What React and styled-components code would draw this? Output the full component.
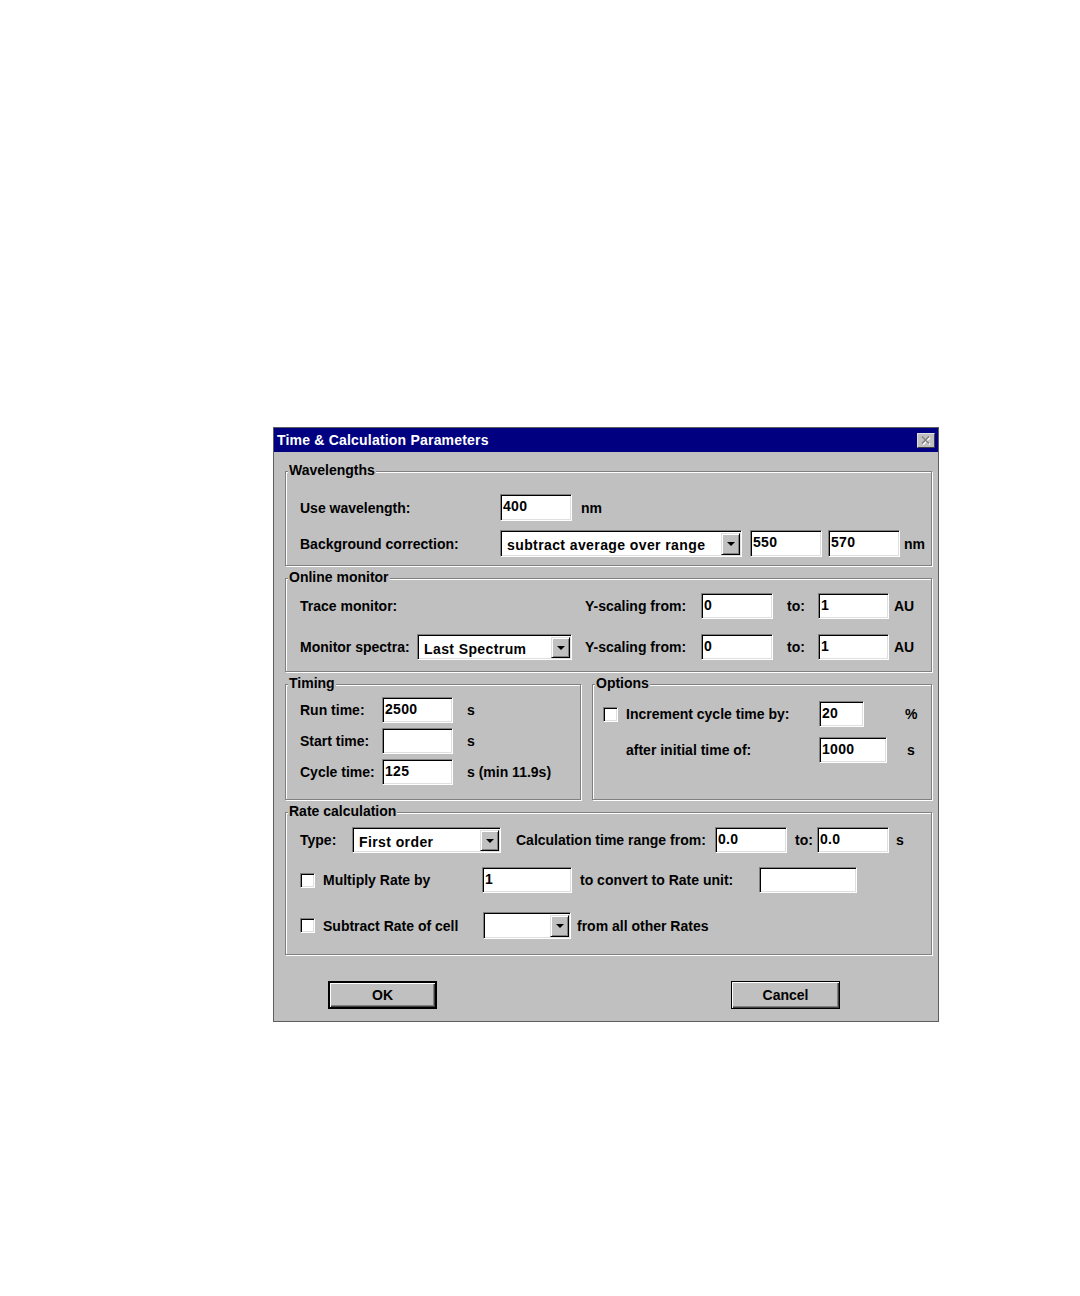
import React from 'react';
import styled, { createGlobalStyle } from 'styled-components';

const GlobalStyle = createGlobalStyle`
  body {
    margin: 0;
    background: #ffffff;
    font-family: "Liberation Sans", Arial, sans-serif;
  }
`;

// fondo blanco de la página, el diálogo va desplazado
const Page = styled.div`
  padding: 427px 0 0 273px;
  min-height: 1296px;
  box-sizing: border-box;
`;

const Window = styled.div`
  width: 666px;
  box-sizing: border-box;
  background: #c0c0c0;
  border: 1px solid #5e5e5e;
  color: #000;
  font-size: 14px;
  font-weight: bold;
`;

const TitleBar = styled.div`
  height: 24px;
  background: #000080;
  color: #fff;
  display: flex;
  align-items: center;
  justify-content: space-between;
  padding: 0 3px 0 3px;
`;

const Title = styled.span`
  font-size: 14px;
  font-weight: bold;
  letter-spacing: 0.2px;
`;

const CloseBox = styled.div`
  width: 18px;
  height: 15px;
  box-sizing: border-box;
  background: #c0c0c0;
  border: 1px solid;
  border-color: #dfdfdf #404040 #404040 #dfdfdf;
  display: flex;
  align-items: center;
  justify-content: center;
`;

const Body = styled.div`
  padding: 19px 6px 12px 11px;
  display: flex;
  flex-direction: column;
  gap: 12px;
`;

// grupo con borde "grabado" estilo Windows 95
const Group = styled.div`
  position: relative;
  box-sizing: border-box;
  border: 1px solid #808080;
  box-shadow: inset 1px 1px #fff, 1px 1px #fff;
  padding: ${({ $pt }) => $pt}px 0 ${({ $pb }) => $pb}px ${({ $pl }) => $pl || 14}px;
  width: ${({ $w }) => ($w ? `${$w}px` : 'auto')};
  flex: ${({ $w }) => ($w ? 'none' : '1')};
`;

const Legend = styled.span`
  position: absolute;
  top: -10px;
  left: 2px;
  line-height: 16px;
  padding: 0 1px;
  background: #c0c0c0;
`;

const Rows = styled.div`
  display: flex;
  flex-direction: column;
  gap: ${({ $gap }) => $gap}px;
`;

const Row = styled.div`
  display: flex;
  align-items: center;
  height: ${({ $h }) => $h || 26}px;
  margin-top: ${({ $mt }) => $mt || 0}px;
`;

const Columns = styled.div`
  display: flex;
  gap: 11px;
`;

const Label = styled.span`
  width: ${({ $w }) => ($w ? `${$w}px` : 'auto')};
  margin-left: ${({ $ml }) => $ml || 0}px;
  flex: none;
  white-space: nowrap;
  line-height: 16px;
`;

const Field = styled.input`
  width: ${({ $w }) => $w}px;
  height: 100%;
  box-sizing: border-box;
  margin: 0;
  padding: 0 2px 3px 2px;
  background: #fff;
  border: 1px solid;
  border-color: #808080 #fff #fff #808080;
  box-shadow: inset 1px 1px #000, inset -1px -1px #dfdfdf;
  font-family: "Liberation Sans", Arial, sans-serif;
  font-size: 14px;
  font-weight: bold;
  letter-spacing: 0.3px;
  color: #000;
  outline: none;
`;

const SelectBox = styled.div`
  width: ${({ $w }) => $w}px;
  height: ${({ $h }) => $h || 26}px;
  box-sizing: border-box;
  flex: none;
  display: flex;
  align-items: stretch;
  background: #fff;
  border: 1px solid;
  border-color: #808080 #fff #fff #808080;
  box-shadow: inset 1px 1px #000, inset -1px -1px #dfdfdf;
  padding: 2px 1px 1px 2px;
`;

const SelectText = styled.span`
  flex: 1;
  padding: 2px 0 0 4px;
  line-height: 20px;
  white-space: nowrap;
  overflow: hidden;
  letter-spacing: 0.4px;
`;

const ArrowButton = styled.span`
  width: 19px;
  flex: none;
  box-sizing: border-box;
  background: #c0c0c0;
  border: 1px solid;
  border-color: #dfdfdf #000 #000 #dfdfdf;
  box-shadow: inset 1px 1px #fff, inset -1px -1px #808080;
  display: flex;
  align-items: center;
  justify-content: center;
`;

const Arrow = styled.span`
  width: 0;
  height: 0;
  border-left: 4px solid transparent;
  border-right: 4px solid transparent;
  border-top: 4px solid #000;
`;

const Check = styled.span`
  width: 15px;
  height: 15px;
  box-sizing: border-box;
  flex: none;
  background: #fff;
  border: 1px solid;
  border-color: #808080 #fff #fff #808080;
  box-shadow: inset 1px 1px #000, inset -1px -1px #dfdfdf;
  margin-right: ${({ $mr }) => $mr || 8}px;
`;

const ButtonBar = styled.div`
  display: flex;
  gap: 294px;
  padding-left: 43px;
  margin-top: 14px;
`;

const Button = styled.button`
  width: 109px;
  height: 28px;
  box-sizing: border-box;
  background: #c0c0c0;
  border: ${({ $default }) => ($default ? '2px' : '1px')} solid #000;
  box-shadow: inset 1px 1px #fff, inset -1px -1px #404040, inset -2px -2px #808080;
  font-family: "Liberation Sans", Arial, sans-serif;
  font-size: 14px;
  font-weight: bold;
  color: #000;
  padding: 0;
  cursor: pointer;
`;

const Select = ({ w, h, children }) => (
  <SelectBox $w={w} $h={h}>
    <SelectText>{children}</SelectText>
    <ArrowButton>
      <Arrow />
    </ArrowButton>
  </SelectBox>
);

const CloseIcon = () => (
  <svg width="12" height="10" viewBox="0 0 12 10">
    <path d="M3 2.5 L10 9.5 M10 2.5 L3 9.5" stroke="#fff" strokeWidth="1.6" fill="none" />
    <path d="M2 1.5 L9 8.5 M9 1.5 L2 8.5" stroke="#808080" strokeWidth="1.6" fill="none" />
  </svg>
);

export default function App() {
  return (
    <Page>
      <GlobalStyle />
      <Window>
        <TitleBar>
          <Title>Time &amp; Calculation Parameters</Title>
          <CloseBox>
            <CloseIcon />
          </CloseBox>
        </TitleBar>

        <Body>
          <Group $pt={22} $pb={8}>
            <Legend>Wavelengths</Legend>
            <Rows $gap={9}>
              <Row $h={27}>
                <Label $w={200}>Use wavelength:</Label>
                <Field $w={72} defaultValue="400" />
                <Label $ml={9}>nm</Label>
              </Row>
              <Row $h={27}>
                <Label $w={200}>Background correction:</Label>
                <Select w={242} h={27}>subtract average over range</Select>
                <Field $w={72} defaultValue="550" style={{ marginLeft: 8 }} />
                <Field $w={72} defaultValue="570" style={{ marginLeft: 6 }} />
                <Label $ml={4}>nm</Label>
              </Row>
            </Rows>
          </Group>

          <Group $pt={14} $pb={11}>
            <Legend>Online monitor</Legend>
            <Rows $gap={15}>
              <Row>
                <Label $w={285}>Trace monitor:</Label>
                <Label $w={116}>Y-scaling from:</Label>
                <Field $w={72} defaultValue="0" />
                <Label $w={31} $ml={14}>to:</Label>
                <Field $w={71} defaultValue="1" />
                <Label $ml={5}>AU</Label>
              </Row>
              <Row>
                <Label $w={117}>Monitor spectra:</Label>
                <Select w={155}>Last Spectrum</Select>
                <Label $w={116} $ml={13}>Y-scaling from:</Label>
                <Field $w={72} defaultValue="0" />
                <Label $w={31} $ml={14}>to:</Label>
                <Field $w={71} defaultValue="1" />
                <Label $ml={5}>AU</Label>
              </Row>
            </Rows>
          </Group>

          <Columns>
            <Group $w={296} $pt={12} $pb={14}>
              <Legend>Timing</Legend>
              <Rows $gap={5}>
                <Row>
                  <Label $w={82}>Run time:</Label>
                  <Field $w={71} defaultValue="2500" />
                  <Label $ml={14}>s</Label>
                </Row>
                <Row>
                  <Label $w={82}>Start time:</Label>
                  <Field $w={71} defaultValue="" />
                  <Label $ml={14}>s</Label>
                </Row>
                <Row>
                  <Label $w={82}>Cycle time:</Label>
                  <Field $w={71} defaultValue="125" />
                  <Label $ml={14}>s (min 11.9s)</Label>
                </Row>
              </Rows>
            </Group>

            <Group $pt={16} $pb={14} $pl={10}>
              <Legend>Options</Legend>
              <Rows $gap={10}>
                <Row>
                  <Check />
                  <Label $w={193}>Increment cycle time by:</Label>
                  <Field $w={45} defaultValue="20" />
                  <Label $ml={41}>%</Label>
                </Row>
                <Row>
                  <Label $w={193} $ml={23}>after initial time of:</Label>
                  <Field $w={68} defaultValue="1000" />
                  <Label $ml={20}>s</Label>
                </Row>
              </Rows>
            </Group>
          </Columns>

          <Group $pt={14} $pb={15}>
            <Legend>Rate calculation</Legend>
            <Rows $gap={14}>
              <Row>
                <Label $w={52}>Type:</Label>
                <Select w={149}>First order</Select>
                <Label $w={199} $ml={15}>Calculation time range from:</Label>
                <Field $w={72} defaultValue="0.0" />
                <Label $w={22} $ml={8}>to:</Label>
                <Field $w={72} defaultValue="0.0" />
                <Label $ml={7}>s</Label>
              </Row>
              <Row>
                <Check />
                <Label $w={159}>Multiply Rate by</Label>
                <Field $w={90} defaultValue="1" />
                <Label $w={179} $ml={8}>to convert to Rate unit:</Label>
                <Field $w={98} defaultValue="" />
              </Row>
              <Row $h={27} $mt={5}>
                <Check />
                <Label $w={160}>Subtract Rate of cell</Label>
                <Select w={88} h={27}></Select>
                <Label $ml={6}>from all other Rates</Label>
              </Row>
            </Rows>
          </Group>

          <ButtonBar>
            <Button $default>OK</Button>
            <Button>Cancel</Button>
          </ButtonBar>
        </Body>
      </Window>
    </Page>
  );
}
